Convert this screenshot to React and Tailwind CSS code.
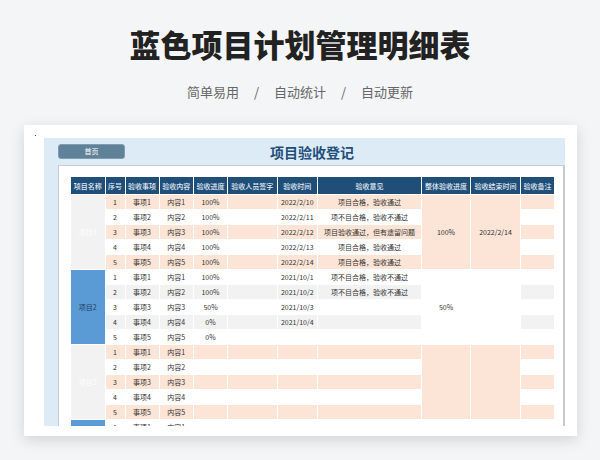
const headers = ["项目名称", "序号", "验收事项", "验收内容", "验收进度", "验收人员签字", "验收时间", "验收意见", "整体验收进度", "验收结束时间", "验收备注"]
const widths = ["w-[34.5px]", "w-[20px]", "w-[34px]", "w-[34.5px]", "w-[34px]", "w-[49.5px]", "w-[40.5px]", "w-[104px]", "w-[49px]", "w-[50px]", "w-[34px]"]

const pass = "项目合格，验收通过"
const fail = "项不目合格，验收不通过"

const groups = [
    {
        name: "项目1",
        nameClass: "bg-[#f2f2f2] text-white",
        stripe: "bg-[#fce4d6]",
        stripeOn: 0,
        mergedClass: "bg-[#fce4d6]",
        overall: "100%",
        end: "2022/2/14",
        rows: [
            ["100%", "2022/2/10", pass],
            ["100%", "2022/2/11", fail],
            ["100%", "2022/2/12", "项目验收通过，但有遗留问题"],
            ["100%", "2022/2/13", pass],
            ["100%", "2022/2/14", pass],
        ],
    },
    {
        name: "项目2",
        nameClass: "bg-[#5b9bd5] text-[#1f3f5f]",
        stripe: "bg-[#f2f2f2]",
        stripeOn: 1,
        mergedClass: "bg-white",
        overall: "50%",
        end: "",
        rows: [
            ["100%", "2021/10/1", fail],
            ["100%", "2021/10/2", fail],
            ["50%", "2021/10/3", ""],
            ["0%", "2021/10/4", ""],
            ["0%", "", ""],
        ],
    },
    {
        name: "项目3",
        nameClass: "bg-[#f2f2f2] text-white",
        stripe: "bg-[#fce4d6]",
        stripeOn: 0,
        mergedClass: "bg-[#fce4d6]",
        overall: "",
        end: "",
        rows: [["", "", ""], ["", "", ""], ["", "", ""], ["", "", ""], ["", "", ""]],
    },
]

const cell = "border border-white p-0 text-center align-middle"

const App = () => {
    return (
        <div className="w-[600px] h-[460px] overflow-hidden bg-[#f4f5f7] font-['Noto_Sans_CJK_SC','Noto_Sans',sans-serif]">
            <h1 className="pt-[21px] h-[66px] text-center text-[31px] leading-[46px] font-black text-[#222222]">蓝色项目计划管理明细表</h1>
            <div className="mt-[16px] h-[20px] flex justify-center items-center text-[13px] leading-[20px] text-[#666666]">
                <span>简单易用</span>
                <span className="w-[35px] text-center">/</span>
                <span>自动统计</span>
                <span className="w-[35px] text-center">/</span>
                <span>自动更新</span>
            </div>

            {/* white sheet */}
            <div className="relative ml-[24px] mt-[23px] w-[553px] h-[311px] bg-white pt-[13px] pl-[20px] shadow-[0_4px_14px_rgba(0,0,0,0.14)]">
                <div className="absolute left-[11px] top-[10px] w-[1px] h-[1px] bg-[#a03030]"></div>
                <div className="w-[521px] h-[288px] bg-[#ddebf7] flex flex-col">
                    <div className="h-[27px] shrink-0 flex items-center pl-[14px]">
                        <div className="w-[67px] h-[15px] rounded-[3px] bg-[#5f8299] border border-[#7f9cb0] text-white text-[7px] leading-[13px] text-center">首页</div>
                        <div className="ml-[145px] text-[14px] leading-[20px] font-bold text-[#1f4e79]">项目验收登记</div>
                    </div>
                    <div className="ml-[14px] flex-1 min-h-0 overflow-hidden bg-white border-l border-t border-r-2 border-[#c8ccd2] pl-[11px] pt-[10px]">
                        <table className="w-[484px] table-fixed border-collapse text-[7px] leading-[14px] text-[#333333]">
                            <colgroup>
                                {widths.map((w, i) => <col key={i} className={w} />)}
                            </colgroup>
                            <thead>
                                <tr className="h-[18px] bg-[#1f4e79] text-[#e4edf5]">
                                    {headers.map((h) => (
                                        <th key={h} className={`${cell} font-medium whitespace-nowrap`}>{h}</th>
                                    ))}
                                </tr>
                            </thead>
                            <tbody>
                                {groups.map((g) => g.rows.map((r, i) => {
                                    const bg = i % 2 === g.stripeOn ? g.stripe : "bg-white"
                                    return (
                                        <tr key={g.name + i} className="h-[15px]">
                                            {i === 0 && <td rowSpan={5} className={`${cell} ${g.nameClass}`}>{g.name}</td>}
                                            <td className={`${cell} ${bg}`}>{i + 1}</td>
                                            <td className={`${cell} ${bg}`}>事项{i + 1}</td>
                                            <td className={`${cell} ${bg}`}>内容{i + 1}</td>
                                            <td className={`${cell} ${bg}`}>{r[0]}</td>
                                            <td className={`${cell} ${bg}`}></td>
                                            <td className={`${cell} ${bg}`}>{r[1]}</td>
                                            <td className={`${cell} ${bg}`}>{r[2]}</td>
                                            {i === 0 && <td rowSpan={5} className={`${cell} ${g.mergedClass}`}>{g.overall}</td>}
                                            {i === 0 && <td rowSpan={5} className={`${cell} ${g.mergedClass}`}>{g.end}</td>}
                                            <td className={`${cell} ${bg}`}></td>
                                        </tr>
                                    )
                                }))}
                                <tr className="h-[15px]">
                                    <td className={`${cell} bg-[#5b9bd5]`}></td>
                                    <td className={cell}>1</td>
                                    <td className={cell}>事项1</td>
                                    <td className={cell}>内容1</td>
                                </tr>
                            </tbody>
                        </table>
                    </div>
                </div>
            </div>
        </div>
    )
}

export default App
